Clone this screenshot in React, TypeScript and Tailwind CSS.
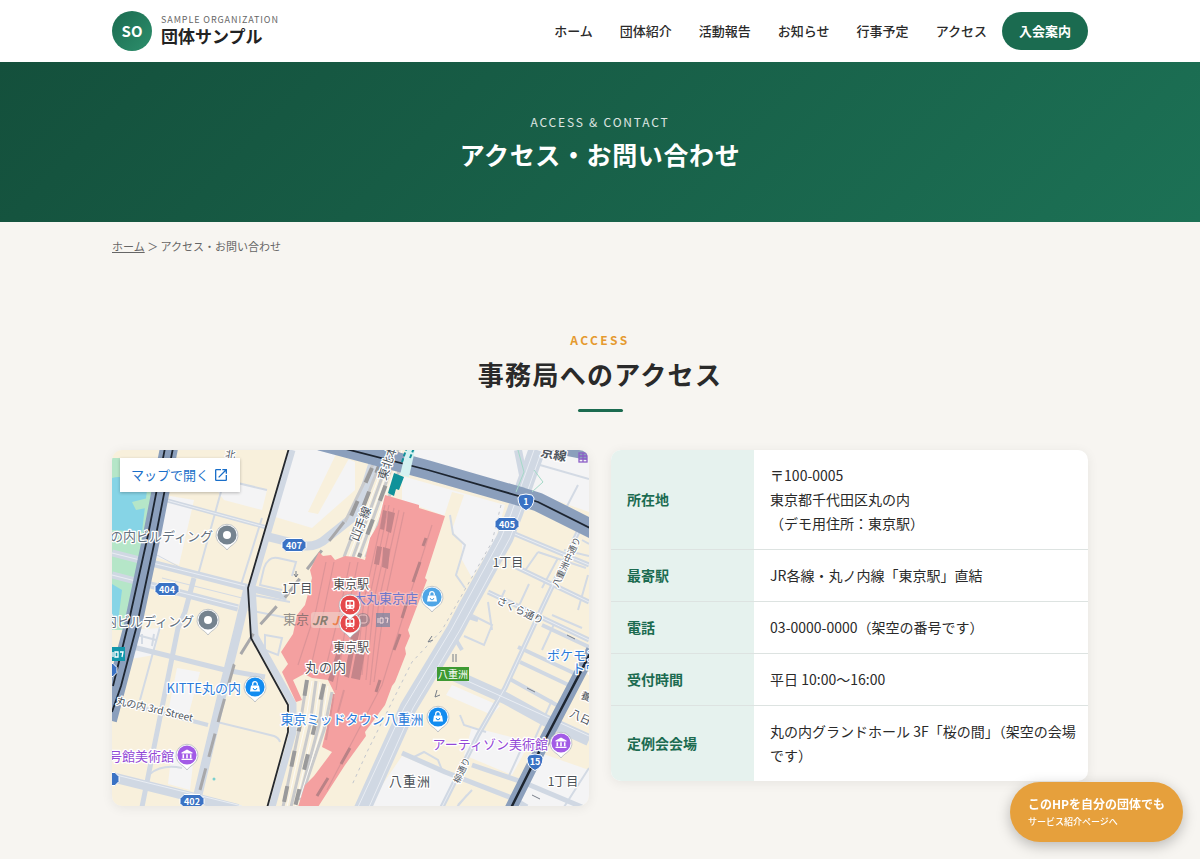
import type { ReactNode } from "react";
import { MdOpenInNew } from "react-icons/md";

const NAV_LINKS = [
  { href: "#home", label: "ホーム" },
  { href: "#about", label: "団体紹介" },
  { href: "#reports", label: "活動報告" },
  { href: "#news", label: "お知らせ" },
  { href: "#events", label: "行事予定" },
  { href: "#access", label: "アクセス" },
];

const ACCESS_INFO: { label: string; value: ReactNode }[] = [
  {
    label: "所在地",
    value: (
      <>
        〒100-0005
        <br />
        東京都千代田区丸の内
        <br />
        （デモ用住所：東京駅）
      </>
    ),
  },
  { label: "最寄駅", value: "JR各線・丸ノ内線「東京駅」直結" },
  { label: "電話", value: "03-0000-0000（架空の番号です）" },
  { label: "受付時間", value: "平日 10:00〜16:00" },
  { label: "定例会会場", value: "丸の内グランドホール 3F「桜の間」（架空の会場です）" },
];

function Header() {
  return (
    <header className="bg-white">
      <div className="mx-auto flex max-w-[1008px] flex-wrap items-center justify-between gap-x-4 px-4 py-[11px]">
        <a href="#home" className="flex items-center gap-[9px]">
          <span className="flex size-10 items-center justify-center rounded-full bg-linear-135 from-[#1b6b50] to-[#2d8f6c] text-[15px] font-bold text-white">
            SO
          </span>
          <span className="flex flex-col pb-0.5">
            <span className="text-[9px] leading-3 tracking-widest text-[#666]">
              SAMPLE ORGANIZATION
            </span>
            <span className="text-[17px] leading-5 font-bold text-[#222]">団体サンプル</span>
          </span>
        </a>
        <nav className="flex flex-wrap items-center gap-[3px]" aria-label="メイン">
          {NAV_LINKS.map((link) => (
            <a
              key={link.href}
              href={link.href}
              className="px-3 py-2 text-[13px] leading-5 font-medium hover:text-[#1b6b50]"
            >
              {link.label}
            </a>
          ))}
          <a
            href="#join"
            className="rounded-full bg-[#1b6b50] px-[17px] py-[9px] text-[13px] leading-5 font-bold text-white"
          >
            入会案内
          </a>
        </nav>
      </div>
    </header>
  );
}

function RouteBadge({ x, y, label }: { x: number; y: number; label: string }) {
  return (
    <g transform={`translate(${x} ${y})`}>
      <path
        d="M-8-6.5H8L12-2.5V2.5L8 6.5H-8L-12 2.5V-2.5Z"
        fill="#3a72c4"
        stroke="#fff"
        strokeWidth="1"
        strokeLinejoin="round"
      />
      <text y="3.5" textAnchor="middle" fontSize="9" fontWeight="700" fill="#fff">
        {label}
      </text>
    </g>
  );
}

function Shield({ x, y, label }: { x: number; y: number; label: string }) {
  return (
    <g transform={`translate(${x} ${y})`}>
      <path
        d="M-6-7Q0-9 6-7L8-4Q8 5 0 8.500Q-8 5-8-4Z"
        fill="#3a72c4"
        stroke="#fff"
        strokeWidth="1"
      />
      <text y="3" textAnchor="middle" fontSize="9" fontWeight="700" fill="#fff">
        {label}
      </text>
    </g>
  );
}

type PinKind = "dot" | "bag" | "museum" | "train";

function Pin({ x, y, color, kind }: { x: number; y: number; color: string; kind: PinKind }) {
  return (
    <g transform={`translate(${x} ${y})`}>
      <path
        d="M0 15Q-2 12-6 9.500A11 11 0 1 1 6 9.500Q2 12 0 15Z"
        fill="#fff"
        stroke="#9aa3ad"
        strokeWidth="0.6"
      />
      <circle r="9.600" fill={color} />
      {kind === "dot" && <circle r="4" fill="#fff" />}
      {kind === "bag" && (
        <g>
          <path d="M-4-1.500H4L5 4.500H-5Z" fill="#fff" />
          <path d="M-2.300-1.500V-3A2.300 2.300 0 0 1 2.300-3V-1.500" fill="none" stroke="#fff" strokeWidth="1.300" />
          <path d="M-1.800 1A1.800 1.800 0 0 0 1.800 1" fill="none" stroke={color} />
        </g>
      )}
      {kind === "museum" && (
        <g fill="#fff">
          <path d="M-5.500-2.500L0-5.500L5.500-2.500V-1.500H-5.500Z" />
          <path d="M-4.500-.8h1.600v4h-1.600zM-.8-.8h1.600v4H-.8zM2.900-.8h1.600v4H2.900zM-5.500 3.800h11v1.300h-11z" />
        </g>
      )}
      {kind === "train" && (
        <g>
          <rect x="-4.500" y="-5" width="9" height="9" rx="2" fill="#fff" />
          <path d="M-3-3.200h2.500v3H-3zM.5-3.200H3v3H.5z" fill={color} />
          <circle cx="-2" cy="2" r=".8" fill={color} />
          <circle cx="2" cy="2" r=".8" fill={color} />
          <path d="M-3 4.500L-4 6M3 4.500L4 6" stroke="#fff" />
        </g>
      )}
    </g>
  );
}

function StationMap() {
  return (
    <svg
      viewBox="0 0 477 356"
      preserveAspectRatio="xMidYMin slice"
      className="block size-full"
      role="img"
      aria-label="東京駅周辺の地図"
    >
      <rect width="477" height="357" fill="#f8f0dc" />

      {/* pale blocks */}
      <g fill="#f4f4f5">
        <path d="M58 46L82 50L67 115L38 105Z" />
        <path d="M96 28L155 40L150 60L112 50Z" />
        <path d="M178 0H215L243 12V40L200 78L160 66Z" />
        <path d="M290 26L393 55L384 88L360 128L350 110L350 92L335 75L333 66L290 50Z" />
        <path d="M300 0H477V62L420 42L305 14Z" />
        <path d="M15 180L48 178L42 205L13 210Z" />
        <path d="M60 300L82 305L78 340L56 334Z" />
        <path d="M340 235L388 256L380 265L334 245Z" />
        <path d="M360 277L418 292L400 325L352 305Z" />
        <path d="M290 306L345 328L332 357H255Z" />
        <path d="M420 300L477 320V357H405Z" />
        <path d="M65 218L88 222L75 270L56 262Z" />
      </g>
      <path d="M235 12L242 0H226L196 62L206 64Z" fill="#f8f0dc" />
      <path d="M340 42L352 45L333 100L322 98Z" fill="#f8f0dc" />

      {/* moat and park */}
      <path d="M0 8H48L28 150L18 180H0Z" fill="#b5e6c8" />
      <path d="M0 28Q14 24 22 36L35 40L30 82L0 80Z" fill="#86d4e6" />
      <path d="M8 10H48L46 36L28 32L20 14Z" fill="#86d4e6" />
      <path d="M0 134L10 140L6 172L0 176Z" fill="#86d4e6" />
      <path d="M20 52L36 48L34 58L24 60Z" fill="#b5e6c8" />

      {/* thin streets */}
      <g fill="none" stroke="#d3dae4" strokeWidth="2">
        <path d="M110 38L86 125M96 26L155 40M150 68L128 138" />
        <path d="M136 144L178 152M136 160L176 168M166 108Q156 106 152 118L148 135L170 140M166 108L184 112L180 126" />
        <path d="M50 128L130 148M45 105L88 128" strokeWidth="1" />
        <path d="M18 183L44 190M22 190V184M30 194V184M40 196L42 184" />
        <path d="M48 177L28 250M153 185L170 188L166 205L153 200Z" />
        <path d="M38 324Q50 314 70 318M105 272L162 286Q167 288 168 292" />
        <path d="M338 65L341 84L353 95L344 125L353 138" />
        <path d="M426 102L474 118M426 102L412 122M446 108L430 138M393 140L386 155M417 134L405 160" />
        <path d="M376 152L380 180M360 165L380 175L372 195L352 186M348 265L352 275L374 282" />
        <path d="M440 165L470 178M443 172L430 200M466 225L476 205M452 100L477 106" />
        <path d="M412 293L396 328M355 345L345 357M346 355L360 340" />
        <path d="M477 318L452 357M300 308L312 302L326 310L330 320M420 295L440 250" />
        <path d="M428 15L477 29M466 35L452 62M470 90L477 94M476 125L466 160" />
      </g>
      <path
        d="M389 55L380 92L330 180L300 212L256 300L240 335"
        fill="none"
        stroke="#c2c6cd"
        strokeDasharray="3 4"
      />

      {/* streets */}
      <g fill="none" stroke="#d0d8e3" strokeLinejoin="round">
        <path d="M50 49L153 77" strokeWidth="4" />
        <path d="M153 86L193 96Q205 97 215 88L245 64L262 10" strokeWidth="9" />
        <path d="M0 103L133 137L175 147" strokeWidth="7" />
        <path d="M0 125L126 158" strokeWidth="7" />
        <path d="M82 128L73 162L66 178L30 357" strokeWidth="5" />
        <path d="M136 138L126 180L113 232L83 357" strokeWidth="9" />
        <path d="M13 195L113 220L153 227" strokeWidth="5" />
        <path d="M0 250L96 275" strokeWidth="4" />
        <path d="M0 327L60 342L126 359" strokeWidth="10" />
        <path d="M180 0L140 136L143 186L181 254L181 282L160 357" strokeWidth="7" />
        <path d="M406 0L412 30" strokeWidth="8" />
        <path d="M425 0L403 62L393 88L356 155L343 180L296 258L250 360" strokeWidth="17" />
        <path d="M335 222L393 248L433 270L477 290" strokeWidth="12" />
        <path d="M466 82L430 158L393 238L366 285L330 357" strokeWidth="5" />
        <path d="M403 84L477 115M400 115L477 152M376 142L477 190" strokeWidth="5" />
        <path d="M396 228L450 258M408 212L463 238M406 197L466 225M430 175L477 197" strokeWidth="4" />
        <path d="M290 303L333 322L400 348L415 357M360 315L413 333L470 357" strokeWidth="5" />
        <path d="M350 200L344 190L350 165L366 170" strokeWidth="4" />
      </g>
      <g fill="none" stroke="#e9edf3" strokeWidth="1">
        <path d="M422 0L399 64L389 88L339 180L292 258L246 357" />
        <path d="M430 0L408 62L398 88L348 180L301 258L257 357" />
        <path d="M340 224L477 286M0 324L130 356M0 103L133 136M0 125L126 157" />
        <path d="M50 49L153 77M403 84L477 115M400 115L477 152M376 142L477 190M466 82L430 158L393 238L366 285L330 357" />
      </g>

      {/* rail yard outside the station */}
      <g fill="none" stroke="#c9cacc" strokeWidth="3">
        <path d="M273 0L232 107M280 0L241 107M286 0L247 107M292 8L254 107M264 8L233 72" />
        <path d="M195 230L188 275L171 357M204 231L198 275L179 357M212 234L207 275L187 350M220 242L212 280L190 345" />
      </g>
      <g fill="none" stroke="#fbfaf7" strokeWidth="1">
        <path d="M277 0L237 107M283 0L244 107M290 0L251 107" />
        <path d="M200 231L193 275L175 357M208 232L202 275L183 357M216 236L209 280L188 348" />
      </g>
      <g fill="none" stroke="#9a9a9b" strokeWidth="4" strokeDasharray="16 20">
        <path d="M270 8L232 107M286 2L247 107M260 18L233 80" />
        <path d="M195 230L188 275L171 357M212 234L203 275L183 357" />
      </g>
      <path
        d="M232 72L175 145L145 178L122 215L108 265L88 340"
        fill="none"
        stroke="#a8a8aa"
        strokeWidth="3"
        strokeDasharray="24 12"
      />

      {/* station building */}
      <path
        d="M273 45L307 55V58L333 66L313 128L315 130L296 180L298 186L293 198L294 204L283 232L280 236L273 255L253 282L254 286L233 315L206 357H186L193 335L202 326L220 302L210 297L223 244L216 230L200 228L192 224L181 230L190 250L184 252L170 222L176 214L169 202L181 184L185 165L193 155L197 140L200 128L198 120L207 102L211 106L219 105L223 110L233 106L243 107L253 110L258 88L266 75Z"
        fill="#f4a0a0"
      />
      <g fill="none" stroke="#dd9497" strokeWidth="1.200">
        <path d="M273 55L252 150L244 225M277 55L257 150L250 225M282 58L262 150L254 230M287 60L267 150L258 235" />
        <path d="M292 62L273 150L262 232M214 112L204 160L186 215M222 112L212 160L197 225M238 112L228 160L212 225M246 112L236 160L224 240" />
        <path d="M320 75L290 170L270 235L215 340" />
      </g>
      <g fill="#c4858a">
        <path d="M271 60L275 61L272 80L268 79ZM276 61L283 63L279 83L274 81Z" />
        <path d="M265 96L270 97L267 115L262 114ZM271 97L278 99L276 119L270 117Z" />
        <path d="M238 196L243 196L237 228L232 226ZM245 197L254 196L248 230L239 228Z" />
        <path d="M224 204L229 204L221 232L216 230Z" />
        <path d="M240 178L248 180L245 193L238 192Z" />
      </g>
      <g fill="none" stroke="#b98286" strokeWidth="3">
        <path d="M314 88L311 96M308 112L301 132M295 152L290 168M288 184L282 200M268 230L264 242" />
        <path d="M238 298L229 314M216 328L205 346" />
      </g>
      <path d="M222 244L214 290M232 240L226 262" stroke="#dd9497" strokeWidth="2" />

      {/* expressways */}
      <g fill="none" strokeLinejoin="round">
        <path d="M57 -2L40 85L21 175L5 236L-4 270" stroke="#8b9fbc" strokeWidth="18" />
        <path d="M53 -2L36 85L16 175L1 236" stroke="#1d2530" strokeWidth="1.800" />
        <path d="M61 -2L44 85L25 175L9 236L0 262" stroke="#1d2530" strokeWidth="1.800" />
        <path d="M208 -9L316 20L410 47L426 52L482 80" stroke="#8b9fbc" strokeWidth="19" />
        <path d="M230 -2L316 20L410 47L426 52L480 79" stroke="#1d2530" strokeWidth="1.800" />
        <path d="M480 200L433 290L398 360" stroke="#8b9fbc" strokeWidth="12" />
        <path d="M480 200L433 290L398 360" stroke="#1d2530" strokeWidth="2.500" />
        <path d="M455 0H475V10L455 6Z" fill="#8b9fbc" />
        <path d="M422 20L431 32L420 42" stroke="#a5d9c8" />
        <path d="M406 0L412 22L404 42" stroke="#a5d9c8" />
      </g>
      <path d="M177 -2L136 138L139 188L176 255V282L155 358" fill="none" stroke="#24282e" strokeWidth="1.800" />
      <path d="M288 25L294 0H303L297 27Z" fill="#d5f2f1" />
      <path d="M282 23L292 27L287 40L284 39L282 46L276 43Z" fill="#10929a" />
      <path d="M290 12L294 0M298 8L302 -2" stroke="#10929a" strokeWidth="2" strokeDasharray="4 2" />

      {/* one-way arrows */}
      <g fill="none" stroke="#777e88" strokeWidth="1">
        <path d="M184 121V127M182 124L184 127L186 124M341 204V212M344 204V212M325 240L323 247L328 245M320 186L316 192L321 190" />
        <path d="M415 238L423 242M455 185L463 189M420 345L428 349" />
      </g>
      <circle cx="102" cy="329" r="1.500" fill="#7ad0cf" />

      <RouteBadge x={182} y={95} label="407" />
      <RouteBadge x={55} y={139} label="404" />
      <RouteBadge x={395} y={74} label="405" />
      <RouteBadge x={80} y={351} label="402" />
      <RouteBadge x={-5} y={329} label="" />
      <RouteBadge x={-7} y={220} label="" />
      <Shield x={414} y={52} label="1" />
      <Shield x={423} y={312} label="15" />
      <rect x="-2" y="197" width="15" height="14" fill="#1297ab" />
      <path d="M1 202V207M3 202H6V207H3ZM8 202H11L10 207" fill="none" stroke="#fff" strokeWidth="1.300" />
      <g fill="none" stroke="#8c5fc7" strokeWidth="1.300">
        <rect x="467" y="3" width="8" height="9" />
        <path d="M467 6H475M467 9H475M471 3V12" />
      </g>

      {/* street and line names */}
      <g
        fill="#4d545c"
        stroke="#fff"
        strokeWidth="2.500"
        strokeLinejoin="round"
        paintOrder="stroke"
        fontSize="10"
      >
        <text transform="translate(4 254) rotate(13)">丸の内 3rd Street</text>
        <text transform="translate(384 153) rotate(25)">さくら通り</text>
        <text transform="translate(446 138) rotate(-65)" fontSize="9">八重洲中通り</text>
        <text transform="translate(347 334) rotate(-65)" fontSize="9">柳通り</text>
        <text transform="translate(274 31) rotate(-72)" fontSize="12">東北本線</text>
        <text transform="translate(246 92) rotate(-68)" fontSize="12">山手線</text>
        <text transform="translate(428 6) rotate(12)" fontSize="13" fontWeight="700">京線</text>
        <text transform="translate(113 7) rotate(10)">北</text>
        <text transform="translate(468 248) rotate(20)">養</text>
        <text transform="translate(457 266) rotate(25)" fontSize="11">八日</text>
      </g>

      {/* place names */}
      <g
        fill="#4b5056"
        stroke="#fff"
        strokeWidth="2.500"
        strokeLinejoin="round"
        paintOrder="stroke"
        fontSize="13"
        textAnchor="middle"
      >
        <text x="185" y="143" fontSize="12">1丁目</text>
        <text x="396" y="117" fontSize="12">1丁目</text>
        <text x="451" y="336" fontSize="12">1丁目</text>
        <text x="214" y="222" letterSpacing="1">丸の内</text>
        <text x="298" y="336" letterSpacing="1">八重洲</text>
        <g textAnchor="end" fill="#65727f">
          <text x="101" y="91">の内ビルディング</text>
          <text x="82" y="176">内ビルディング</text>
        </g>
        <g fill="#2b7bd9">
          <text x="129" y="243" textAnchor="end">KITTE丸の内</text>
          <text x="240" y="274">東京ミッドタウン八重洲</text>
          <text x="435" y="210" textAnchor="start">ポケモン</text>
          <text x="460" y="223" textAnchor="start">トウ</text>
        </g>
        <g fill="#9348d6" textAnchor="end">
          <text x="436" y="299">アーティゾン美術館</text>
          <text x="62" y="311">号館美術館</text>
        </g>
        <text x="306" y="153" textAnchor="end" fill="#6d78cc" strokeOpacity="0.300">
          大丸東京店
        </text>
      </g>
      <rect x="325" y="217" width="32" height="14" fill="#3f9a32" />
      <text x="341" y="228" fontSize="10" fill="#fff" textAnchor="middle">八重洲</text>

      {/* station transfer signs */}
      <g opacity="0.650">
        <text x="171" y="174" fontSize="13" fill="#5c5c5c">東京</text>
        <rect x="199" y="162" width="35" height="16" rx="3" fill="#f0d3cc" />
        <text x="200" y="175" fontSize="12" fontStyle="italic" fontWeight="700" fill="#50705a">JR</text>
        <text x="220" y="175" fontSize="12" fontStyle="italic" fontWeight="700" fill="#ec7224">JR</text>
        <circle cx="251" cy="170" r="7" fill="#8b7a86" />
        <rect x="247" y="165" width="8" height="8" rx="2" fill="none" stroke="#f1dada" />
        <rect x="264" y="163" width="14" height="14" fill="#6d83a4" />
        <path d="M266 168V173M268 168H271V173H268ZM273 168H276L275 173" fill="none" stroke="#fff" />
      </g>
      <Pin x={238} y={173} color="#e5484a" kind="train" />
      <Pin x={238} y={155} color="#e5484a" kind="train" />
      <g
        fill="#514b4d"
        stroke="#fff"
        strokeWidth="2.500"
        paintOrder="stroke"
        fontSize="12"
        textAnchor="middle"
      >
        <text x="239" y="139">東京駅</text>
        <text x="239" y="202">東京駅</text>
      </g>

      <Pin x={115} y={85} color="#75838f" kind="dot" />
      <Pin x={96} y={170} color="#75838f" kind="dot" />
      <Pin x={320} y={147} color="#4fa5e6" kind="bag" />
      <Pin x={143} y={237} color="#128cf0" kind="bag" />
      <Pin x={326} y={267} color="#128cf0" kind="bag" />
      <Pin x={449} y={293} color="#a25be6" kind="museum" />
      <Pin x={75} y={305} color="#a25be6" kind="museum" />
    </svg>
  );
}

function MapCard() {
  return (
    <div className="relative aspect-[477/356] overflow-hidden rounded-[10px] shadow-[0_2px_12px_rgba(0,0,0,0.07)]">
      <StationMap />
      <a
        href="#map"
        className="absolute top-2 left-2 flex items-center gap-1 bg-white px-[11px] py-[7px] text-[13px] leading-5 text-[#1a6fc9] shadow-[0_1px_3px_rgba(0,0,0,0.25)]"
      >
        マップで開く
        <MdOpenInNew className="size-4" aria-hidden="true" />
      </a>
    </div>
  );
}

function AccessTable() {
  return (
    <div className="overflow-hidden rounded-[10px] bg-white shadow-[0_2px_12px_rgba(0,0,0,0.07)]">
      <table className="w-full border-collapse text-left text-[14px] leading-6">
        <tbody>
          {ACCESS_INFO.map((row) => (
            <tr key={row.label} className="border-b border-[#dde3e1] last:border-b-0">
              <th
                scope="row"
                className="w-[30%] bg-[#e6f2ee] pt-[13px] pr-2 pb-3.5 pl-4 font-bold text-[#1b6b50]"
              >
                {row.label}
              </th>
              <td className="pt-[13px] pr-2 pb-3.5 pl-4">{row.value}</td>
            </tr>
          ))}
        </tbody>
      </table>
    </div>
  );
}

export default function App() {
  return (
    <div
      lang="ja"
      className="min-h-screen bg-[#f7f5f1] font-['Noto_Sans_CJK_JP','Noto_Sans',sans-serif] text-[#2a2a2a]"
    >
      <Header />

      <div className="bg-linear-135 from-[#14503c] to-[#1c7155] px-4 py-[50px] text-center text-white">
        <p className="text-[12px] leading-5 tracking-[0.15em] text-white/85">ACCESS &amp; CONTACT</p>
        <h1 className="mt-1 text-[25px] leading-9 font-bold tracking-wide">
          アクセス・お問い合わせ
        </h1>
      </div>

      <nav
        className="mx-auto max-w-[1008px] px-4 py-3.5 text-[11px] leading-5 text-[#666]"
        aria-label="パンくず"
      >
        <a href="#home" className="underline">
          ホーム
        </a>{" "}
        ＞ アクセス・お問い合わせ
      </nav>

      <main className="mx-auto max-w-[1008px] px-4 pt-[60px] pb-12">
        <div className="flex flex-col items-center text-center">
          <p className="text-[12px] leading-5 font-bold tracking-[0.2em] text-[#e59a2f]">ACCESS</p>
          <h2 className="mt-1 text-[26px] leading-10 font-bold tracking-wider">
            事務局へのアクセス
          </h2>
          <div className="mt-[15px] h-[3px] w-[45px] rounded-full bg-[#1b6b50]" />
        </div>

        <div className="mt-[38px] grid items-start gap-[22px] md:grid-cols-2">
          <MapCard />
          <AccessTable />
        </div>
      </main>

      <a
        href="#service"
        className="fixed right-[17px] bottom-[17px] rounded-full bg-[#e6a03c] px-[18px] py-3 text-white shadow-[0_4px_14px_rgba(0,0,0,0.25)]"
      >
        <span className="block text-[12px] leading-5 font-bold">このHPを自分の団体でも</span>
        <span className="block text-[9px] leading-4 font-medium">サービス紹介ページへ</span>
      </a>
    </div>
  );
}
